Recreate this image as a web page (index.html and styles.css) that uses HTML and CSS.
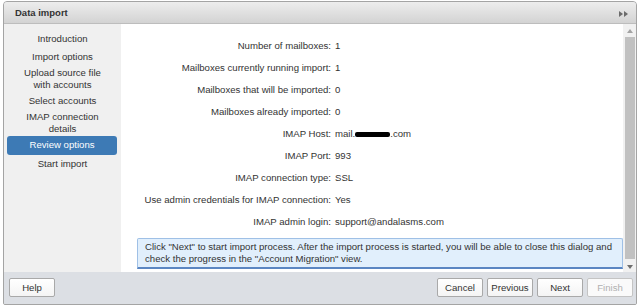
FILE: index.html
```html
<!DOCTYPE html>
<html lang="en">
<head>
    <meta charset="UTF-8">
    <meta name="viewport" content="width=device-width, initial-scale=1.0">
    <title>Data import</title>
    <link rel="stylesheet" href="styles.css">
</head>
<body>
    <div class="window">
        <div class="titlebar">
            <span class="title">Data import</span>
            <svg class="collapse" width="9" height="6" viewBox="0 0 9 6">
                <polygon points="0,0 4,3 0,6" fill="#6b6b6b"/>
                <polygon points="5,0 9,3 5,6" fill="#6b6b6b"/>
            </svg>
        </div>
        <div class="main">
            <div class="steps">
                <div class="step">Introduction</div>
                <div class="step">Import options</div>
                <div class="step two-line">Upload source file<br>with accounts</div>
                <div class="step">Select accounts</div>
                <div class="step two-line">IMAP connection<br>details</div>
                <div class="step active">Review options</div>
                <div class="step">Start import</div>
            </div>
            <div class="content">
                <div class="summary">
                    <div class="label">Number of mailboxes:</div>
                    <div class="value">1</div>
                    <div class="label">Mailboxes currently running import:</div>
                    <div class="value">1</div>
                    <div class="label">Mailboxes that will be imported:</div>
                    <div class="value">0</div>
                    <div class="label">Mailboxes already imported:</div>
                    <div class="value">0</div>
                    <div class="label">IMAP Host:</div>
                    <div class="value">mail.<span class="redacted"></span>.com</div>
                    <div class="label">IMAP Port:</div>
                    <div class="value">993</div>
                    <div class="label">IMAP connection type:</div>
                    <div class="value">SSL</div>
                    <div class="label">Use admin credentials for IMAP connection:</div>
                    <div class="value">Yes</div>
                    <div class="label">IMAP admin login:</div>
                    <div class="value">support@andalasms.com</div>
                </div>
                <div class="notice">
                    Click "Next" to start import process. After the import process is started, you will be able to close this dialog and<br>
                    check the progress in the "Account Migration" view.
                </div>
            </div>
            <div class="scrollbar">
                <svg class="arrow" width="6" height="4" viewBox="0 0 6 4"><polygon points="0,4 3,0 6,4" fill="#a3a3a3"/></svg>
                <div class="thumb"></div>
                <svg class="arrow" width="6" height="4" viewBox="0 0 6 4"><polygon points="0,0 6,0 3,4" fill="#6e6e6e"/></svg>
            </div>
        </div>
        <div class="footer">
            <button class="btn">Help</button>
            <div class="nav-buttons">
                <button class="btn">Cancel</button>
                <button class="btn">Previous</button>
                <button class="btn">Next</button>
                <button class="btn" disabled>Finish</button>
            </div>
        </div>
    </div>
</body>
</html>
```

FILE: styles.css
```css
body { margin: 0; background: #fff; font-family: "Liberation Sans", Arial, sans-serif; font-size: 9.6px; color: #333; }
.window { margin: 1px 3px 0 3px; height: 304px; box-sizing: border-box; border: 1px solid #a4a4a4; border-radius: 4px 4px 2px 2px; display: flex; flex-direction: column; overflow: hidden; background: #dcdfe4; }
.titlebar { height: 21px; flex: none; display: flex; align-items: center; justify-content: space-between; padding: 0 8px 0 11px; background: linear-gradient(#ededed, #d3d3d3); border-bottom: 1px solid #bdbdbd; }
.title { font-weight: bold; font-size: 9.5px; color: #333; }
.collapse { margin-top: 2px; }
.main { height: 248px; flex: none; display: flex; background: #fff; }
.steps { width: 117px; flex: none; background: #f0f0f0; padding-top: 6px; box-sizing: border-box; }
.step { text-align: center; line-height: 12px; padding: 3px 4px; }
.step.two-line { padding: 1px 4px; }
.step.active { background: #3d7ab5; color: #fff; border-radius: 3px; margin: 0 4px 0 3px; padding: 3px 0 4px 0; }
.content { flex: 1; padding: 11px 0 0 16px; overflow: hidden; }
.summary { display: grid; grid-template-columns: 194px 1fr; column-gap: 4px; }
.label { text-align: right; line-height: 22px; white-space: nowrap; }
.value { line-height: 22px; white-space: nowrap; }
.redacted { display: inline-block; width: 35px; height: 5px; background: #000; border-radius: 2px; vertical-align: middle; }
.notice { margin-top: 5px; background: #e1effc; border: 1px solid #9fc0e6; border-bottom: 2px solid #5b86c2; border-radius: 2px 2px 0 0; padding: 2px 7px 2px 7px; line-height: 12px; white-space: nowrap; overflow: hidden; }
.scrollbar { width: 13px; flex: none; background: #f1f1f1; display: flex; flex-direction: column; align-items: center; padding: 5px 0 3px 0; box-sizing: border-box; }
.arrow { flex: none; }
.thumb { flex: 1; width: 10px; background: #c1c1c1; margin: 4px 0 6px 0; }
.footer { flex: 1; display: flex; justify-content: space-between; align-items: flex-start; padding: 6px 3px 0 5px; background: #dcdfe4; }
.nav-buttons { display: flex; gap: 4px; }
.btn { width: 46px; height: 19px; padding: 0; font-family: inherit; font-size: 9.6px; color: #333; background: linear-gradient(#ffffff, #f4f4f4); border: 1px solid #a9a9a9; border-radius: 2px; cursor: pointer; }
.btn:disabled { color: #b0b0b0; border-color: #c4c4c4; background: #fafafa; }
```
